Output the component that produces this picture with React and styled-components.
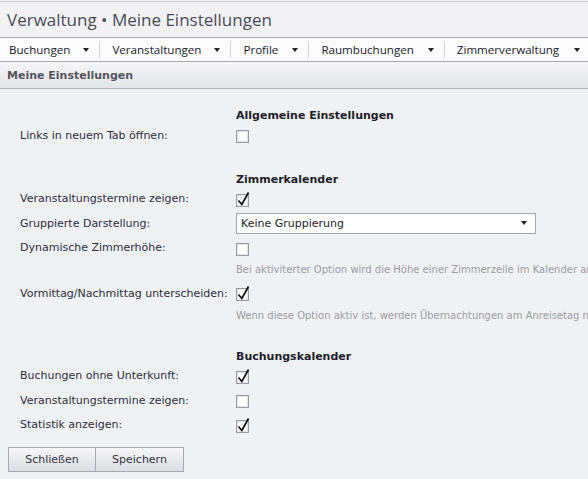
import React from "react";
import styled, { createGlobalStyle } from "styled-components";

const GlobalStyle = createGlobalStyle`
  html, body {
    margin: 0;
    padding: 0;
    background: #f0f1f5;
  }
  body {
    font-family: "DejaVu Sans", Verdana, sans-serif;
    font-size: 11px;
    color: #2a2a33;
  }
`;

const Page = styled.div`
  width: 588px;
  height: 479px;
  overflow: hidden;
  background: #f0f1f5;
`;

const TitleBar = styled.div`
  height: 35px;
  margin-top: 1px;
  border-top: 1px solid #d0d1d6;
  display: flex;
  align-items: center;
  padding-left: 7px;
  font-family: "Open Sans", sans-serif;
  font-size: 17px;
  color: #4b4b57;
  background: #f2f2f5;
`;

const NavBar = styled.div`
  height: 23px;
  border-top: 1px solid #a9a9ae;
  border-bottom: 1px solid #a9a9ae;
  background: #fbfbfc;
  display: flex;
  align-items: center;
  white-space: nowrap;
`;

const NavItem = styled.div`
  display: flex;
  align-items: center;
  height: 17px;
  padding: 0 ${(p) => (p.$last ? 0 : 10)}px 0 ${(p) => (p.$first ? 9 : 12)}px;
  border-right: ${(p) => (p.$last ? "none" : "1px solid #d2d2d6")};
  font-family: "Open Sans", sans-serif;
  font-size: 11.6px;
  color: #22222e;
`;

const Caret = styled.span`
  display: inline-block;
  width: 0;
  height: 0;
  margin-left: ${(p) => p.$gap}px;
  border-left: 3.5px solid transparent;
  border-right: 3.5px solid transparent;
  border-top: 4px solid #222;
`;

const SectionHeader = styled.div`
  height: 26px;
  display: flex;
  align-items: center;
  padding-left: 7px;
  background: linear-gradient(#f6f6f8, #e4e5e9);
  border-bottom: 1px solid #b4b4b9;
  font-weight: bold;
  color: #55555f;
`;

const Form = styled.div`
  display: grid;
  grid-template-columns: 216px 1fr;
  padding: 19px 0 0 20px;
  white-space: nowrap;
`;

const Heading = styled.div`
  grid-column: 2;
  height: 15px;
  line-height: 15px;
  font-weight: bold;
  color: #1e1e2a;
  margin-top: ${(p) => p.$gap || 0}px;
`;

const Label = styled.div`
  grid-column: 1;
  height: 24.5px;
  display: flex;
  align-items: center;
  color: #2e2e3a;
`;

const Field = styled.div`
  grid-column: 2;
  height: 24.5px;
  display: flex;
  align-items: center;
`;

const Hint = styled.div`
  grid-column: 2;
  padding: 2px 0 3px;
  line-height: 16px;
  font-size: 10px;
  color: #9c9ca2;
`;

const Select = styled.div`
  box-sizing: border-box;
  width: 300px;
  height: 21px;
  border: 1px solid #a6a7ae;
  background: #fff;
  display: flex;
  align-items: center;
  justify-content: space-between;
  padding: 0 8px 0 4px;
  color: #1e1e28;
`;

const Buttons = styled.div`
  display: flex;
  padding: 10px 0 0 8px;
`;

const Button = styled.button`
  height: 25px;
  width: ${(p) => p.$w}px;
  margin-left: ${(p) => (p.$joined ? -1 : 0)}px;
  border: 1px solid #a9aab0;
  background: linear-gradient(#f7f7f9, #dcdde2);
  font-family: "DejaVu Sans", Verdana, sans-serif;
  font-size: 11px;
  color: #333344;
  padding: 0;
`;

const Check = ({ checked }) => (
  <svg width="14" height="16" viewBox="0 0 14 16" style={{ display: "block" }}>
    <rect x="0.5" y="3.5" width="12" height="12" fill="#fff" stroke="#9a9ca4" />
    <rect x="1.5" y="4.5" width="10" height="10" fill="none" stroke="#e2e3e8" />
    {checked && (
      <path
        d="M2.5 9.5 L5.8 13.5 L12.5 1.5"
        fill="none"
        stroke="#111"
        strokeWidth="1.7"
        strokeLinejoin="round"
      />
    )}
  </svg>
);

const CheckRow = ({ label, checked }) => (
  <>
    <Label>{label}</Label>
    <Field>
      <Check checked={checked} />
    </Field>
  </>
);

const navItems = [
  ["Buchungen", 13],
  ["Veranstaltungen", 13],
  ["Profile", 14],
  ["Raumbuchungen", 14],
  ["Zimmerverwaltung", 15],
];

export default function App() {
  return (
    <Page>
      <GlobalStyle />
      <TitleBar>Verwaltung • Meine Einstellungen</TitleBar>
      <NavBar>
        {navItems.map(([name, gap], i) => (
          <NavItem key={name} $first={i === 0} $last={i === navItems.length - 1}>
            {name}
            <Caret $gap={gap} />
          </NavItem>
        ))}
      </NavBar>
      <SectionHeader>Meine Einstellungen</SectionHeader>
      <Form>
        <Heading>Allgemeine Einstellungen</Heading>
        <CheckRow label="Links in neuem Tab öffnen:" />

        <Heading $gap={24}>Zimmerkalender</Heading>
        <CheckRow label="Veranstaltungstermine zeigen:" checked />
        <Label>Gruppierte Darstellung:</Label>
        <Field>
          <Select>
            Keine Gruppierung
            <Caret $gap={0} />
          </Select>
        </Field>
        <CheckRow label="Dynamische Zimmerhöhe:" />
        <Hint>
          Bei aktiviterter Option wird die Höhe einer Zimmerzeile im Kalender an die Anzahl der Buchungen angepasst.
        </Hint>
        <CheckRow label="Vormittag/Nachmittag unterscheiden:" checked />
        <Hint>
          Wenn diese Option aktiv ist, werden Übernachtungen am Anreisetag nachmittags angezeigt.
        </Hint>

        <Heading $gap={22}>Buchungskalender</Heading>
        <CheckRow label="Buchungen ohne Unterkunft:" checked />
        <CheckRow label="Veranstaltungstermine zeigen:" />
        <CheckRow label="Statistik anzeigen:" checked />
      </Form>
      <Buttons>
        <Button $w={88}>Schließen</Button>
        <Button $w={89} $joined>
          Speichern
        </Button>
      </Buttons>
    </Page>
  );
}
